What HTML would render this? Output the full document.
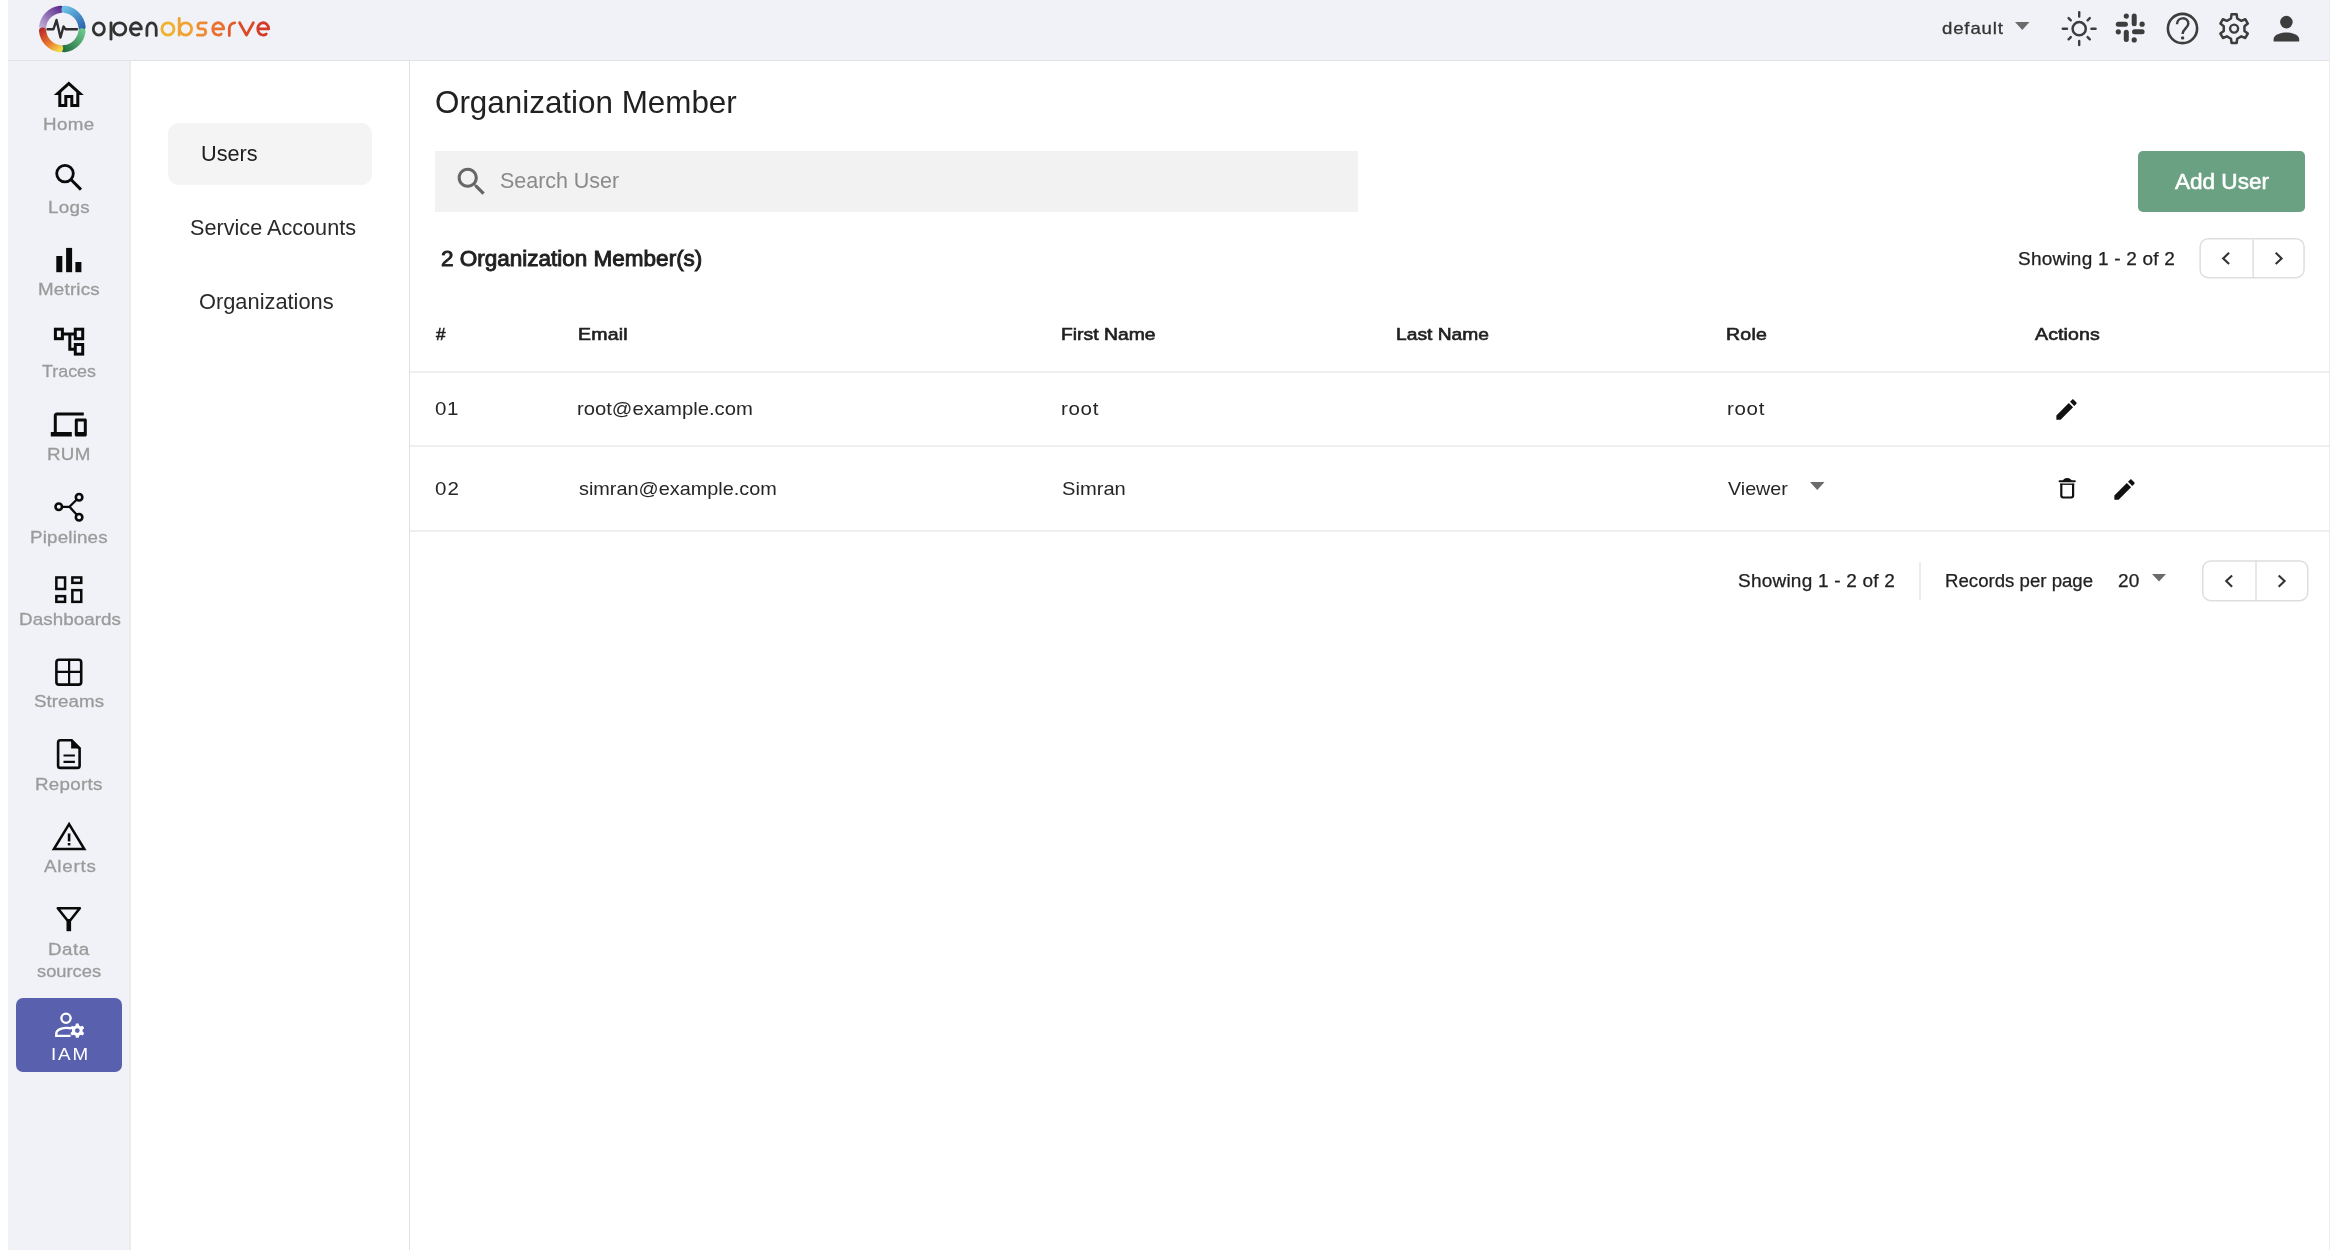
<!DOCTYPE html>
<html><head><meta charset="utf-8"><title>OpenObserve - IAM Users</title>
<style>
html,body{margin:0;padding:0}
body{width:2330px;height:1250px;position:relative;overflow:hidden;background:#fff;font-family:"Liberation Sans", sans-serif}
.t{position:absolute;white-space:nowrap;will-change:transform;transform-origin:0 0}
.b{position:absolute;display:block}
#wrap{position:absolute;left:0;top:0;width:2330px;height:1250px}
</style></head><body>
<div id="wrap"><div class="b" style="left:8px;top:0;width:2322px;height:60px;background:#f1f2f7"></div>
<div class="b" style="left:8px;top:60px;width:2322px;height:1px;background:#e2e2e7"></div>
<div class="b" style="left:8px;top:61px;width:122px;height:1189px;background:#f1f2f7"></div>
<div class="b" style="left:129px;top:61px;width:2px;height:1189px;background:#ebebeb"></div>
<div class="b" style="left:409px;top:61px;width:1px;height:1189px;background:#e0e0e0"></div>
<div class="b" style="left:2329px;top:0px;width:1px;height:1250px;background:#ececec"></div>
<div class="t" style="left:1942.38px;top:20.00px;font-size:16.2px;line-height:16.2px;letter-spacing:0.725px;color:#333333;font-weight:normal;transform:scaleX(1.1500);-webkit-text-stroke:0.3px #333333;">default</div>
<svg class="b" style="left:2015px;top:22px" width="15" height="9" viewBox="0 0 15 9"><path d="M0 0h14.5L7.25 8z" fill="#6b6b6b"/></svg>
<div class="t" style="left:43.41px;top:116.00px;font-size:17.4px;line-height:17.4px;letter-spacing:0.353px;color:#9a9a9a;font-weight:normal;transform:scaleX(1.0800);-webkit-text-stroke:0.3px #9a9a9a;">Home</div>
<div class="t" style="left:48.12px;top:199.00px;font-size:17.4px;line-height:17.4px;letter-spacing:0.306px;color:#9a9a9a;font-weight:normal;transform:scaleX(1.0800);-webkit-text-stroke:0.3px #9a9a9a;">Logs</div>
<div class="t" style="left:37.91px;top:281.00px;font-size:17.4px;line-height:17.4px;letter-spacing:0.182px;color:#9a9a9a;font-weight:normal;transform:scaleX(1.0800);-webkit-text-stroke:0.3px #9a9a9a;">Metrics</div>
<div class="t" style="left:42.21px;top:363.00px;font-size:17.4px;line-height:17.4px;letter-spacing:0.000px;color:#9a9a9a;font-weight:normal;transform:scaleX(1.0272);-webkit-text-stroke:0.3px #9a9a9a;">Traces</div>
<div class="t" style="left:47.41px;top:446.00px;font-size:17.4px;line-height:17.4px;letter-spacing:0.236px;color:#9a9a9a;font-weight:normal;transform:scaleX(1.0800);-webkit-text-stroke:0.3px #9a9a9a;">RUM</div>
<div class="t" style="left:29.82px;top:529.00px;font-size:17.4px;line-height:17.4px;letter-spacing:0.160px;color:#9a9a9a;font-weight:normal;transform:scaleX(1.0800);-webkit-text-stroke:0.3px #9a9a9a;">Pipelines</div>
<div class="t" style="left:18.52px;top:611.00px;font-size:17.4px;line-height:17.4px;letter-spacing:0.073px;color:#9a9a9a;font-weight:normal;transform:scaleX(1.0800);-webkit-text-stroke:0.3px #9a9a9a;">Dashboards</div>
<div class="t" style="left:33.79px;top:693.00px;font-size:17.4px;line-height:17.4px;letter-spacing:0.024px;color:#9a9a9a;font-weight:normal;transform:scaleX(1.0800);-webkit-text-stroke:0.3px #9a9a9a;">Streams</div>
<div class="t" style="left:35.02px;top:776.00px;font-size:17.4px;line-height:17.4px;letter-spacing:0.265px;color:#9a9a9a;font-weight:normal;transform:scaleX(1.0800);-webkit-text-stroke:0.3px #9a9a9a;">Reports</div>
<div class="t" style="left:43.50px;top:858.00px;font-size:17.4px;line-height:17.4px;letter-spacing:0.725px;color:#9a9a9a;font-weight:normal;transform:scaleX(1.0800);-webkit-text-stroke:0.3px #9a9a9a;">Alerts</div>
<div class="t" style="left:47.72px;top:941.00px;font-size:17.4px;line-height:17.4px;letter-spacing:0.441px;color:#9a9a9a;font-weight:normal;transform:scaleX(1.0800);-webkit-text-stroke:0.3px #9a9a9a;">Data</div>
<div class="t" style="left:36.97px;top:963.00px;font-size:17.4px;line-height:17.4px;letter-spacing:0.000px;color:#9a9a9a;font-weight:normal;transform:scaleX(1.0527);-webkit-text-stroke:0.3px #9a9a9a;">sources</div>
<div class="b" style="left:16px;top:998px;width:106px;height:74px;background:#5960ae;border-radius:7px"></div>
<div class="t" style="left:50.64px;top:1046.00px;font-size:17.4px;line-height:17.4px;letter-spacing:1.681px;color:#ffffff;font-weight:normal;transform:scaleX(1.0800);">IAM</div>
<div class="b" style="left:168px;top:123px;width:204px;height:62px;background:#f4f4f4;border-radius:11px"></div>
<div class="t" style="left:201.36px;top:144.00px;font-size:21.5px;line-height:21.5px;letter-spacing:0.000px;color:#212121;font-weight:normal;transform:scaleX(1.0102);">Users</div>
<div class="t" style="left:190.49px;top:218.00px;font-size:21.5px;line-height:21.5px;letter-spacing:0.000px;color:#2a2a2a;font-weight:normal;transform:scaleX(1.0066);">Service Accounts</div>
<div class="t" style="left:198.99px;top:292.00px;font-size:21.5px;line-height:21.5px;letter-spacing:0.000px;color:#2a2a2a;font-weight:normal;transform:scaleX(1.0147);">Organizations</div>
<div class="t" style="left:435.39px;top:87.00px;font-size:30.5px;line-height:30.5px;letter-spacing:0.000px;color:#212121;font-weight:normal;transform:scaleX(1.0289);">Organization Member</div>
<div class="b" style="left:435px;top:151px;width:923px;height:61px;background:#f2f2f2"></div>
<div class="t" style="left:499.70px;top:171.00px;font-size:21.5px;line-height:21.5px;letter-spacing:-0.035px;color:#8a8a8a;font-weight:normal;">Search User</div>
<div class="b" style="left:2138px;top:151px;width:167px;height:61px;background:#6ba183;border-radius:5px"></div>
<div class="t" style="left:2174.60px;top:172.00px;font-size:21.5px;line-height:21.5px;letter-spacing:0.000px;color:#ffffff;font-weight:normal;transform:scaleX(1.0484);-webkit-text-stroke:0.55px #ffffff;">Add User</div>
<div class="t" style="left:441.22px;top:249.00px;font-size:21.5px;line-height:21.5px;letter-spacing:0.000px;color:#212121;font-weight:normal;transform:scaleX(1.0466);-webkit-text-stroke:0.9px #212121;">2 Organization Member(s)</div>
<div class="t" style="left:2017.56px;top:251.00px;font-size:17.6px;line-height:17.6px;letter-spacing:0.203px;color:#212121;font-weight:normal;transform:scaleX(1.0800);-webkit-text-stroke:0.25px #212121;">Showing 1 - 2 of 2</div>
<div class="t" style="left:436.40px;top:326.00px;font-size:17px;line-height:17px;letter-spacing:0.000px;color:#212121;font-weight:normal;-webkit-text-stroke:0.6px #212121;">#</div>
<div class="t" style="left:577.72px;top:326.00px;font-size:17px;line-height:17px;letter-spacing:0.152px;color:#212121;font-weight:normal;transform:scaleX(1.1500);-webkit-text-stroke:0.6px #212121;">Email</div>
<div class="t" style="left:1061.34px;top:326.00px;font-size:17px;line-height:17px;letter-spacing:0.000px;color:#212121;font-weight:normal;transform:scaleX(1.1370);-webkit-text-stroke:0.6px #212121;">First Name</div>
<div class="t" style="left:1395.75px;top:326.00px;font-size:17px;line-height:17px;letter-spacing:-0.000px;color:#212121;font-weight:normal;transform:scaleX(1.1307);-webkit-text-stroke:0.6px #212121;">Last Name</div>
<div class="t" style="left:1726.42px;top:326.00px;font-size:17px;line-height:17px;letter-spacing:0.172px;color:#212121;font-weight:normal;transform:scaleX(1.1500);-webkit-text-stroke:0.6px #212121;">Role</div>
<div class="t" style="left:2035.20px;top:326.00px;font-size:17px;line-height:17px;letter-spacing:0.102px;color:#212121;font-weight:normal;transform:scaleX(1.1500);-webkit-text-stroke:0.6px #212121;">Actions</div>
<div class="b" style="left:410px;top:371px;width:1919px;height:2px;background:#efefef"></div>
<div class="t" style="left:435.19px;top:399.00px;font-size:19px;line-height:19px;letter-spacing:0.593px;color:#262626;font-weight:normal;transform:scaleX(1.0800);">01</div>
<div class="t" style="left:577.47px;top:399.00px;font-size:19px;line-height:19px;letter-spacing:0.000px;color:#262626;font-weight:normal;transform:scaleX(1.0650);">root@example.com</div>
<div class="t" style="left:1061.15px;top:399.00px;font-size:19px;line-height:19px;letter-spacing:0.622px;color:#262626;font-weight:normal;transform:scaleX(1.0800);">root</div>
<div class="t" style="left:1726.85px;top:399.00px;font-size:19px;line-height:19px;letter-spacing:0.622px;color:#262626;font-weight:normal;transform:scaleX(1.0800);">root</div>
<div class="b" style="left:410px;top:445px;width:1919px;height:2px;background:#efefef"></div>
<div class="t" style="left:435.19px;top:479.00px;font-size:19px;line-height:19px;letter-spacing:0.963px;color:#262626;font-weight:normal;transform:scaleX(1.0800);">02</div>
<div class="t" style="left:578.88px;top:479.00px;font-size:19px;line-height:19px;letter-spacing:0.000px;color:#262626;font-weight:normal;transform:scaleX(1.0446);">simran@example.com</div>
<div class="t" style="left:1061.97px;top:479.00px;font-size:19px;line-height:19px;letter-spacing:0.000px;color:#262626;font-weight:normal;transform:scaleX(1.0598);">Simran</div>
<div class="t" style="left:1728.07px;top:479.00px;font-size:19px;line-height:19px;letter-spacing:0.000px;color:#262626;font-weight:normal;transform:scaleX(1.0358);">Viewer</div>
<svg class="b" style="left:1810px;top:482px" width="15" height="9" viewBox="0 0 15 9"><path d="M0 0h14.5L7.25 8z" fill="#6b6b6b"/></svg>
<div class="b" style="left:410px;top:530px;width:1919px;height:2px;background:#efefef"></div>
<div class="t" style="left:1738.36px;top:573.00px;font-size:17.6px;line-height:17.6px;letter-spacing:0.203px;color:#212121;font-weight:normal;transform:scaleX(1.0800);-webkit-text-stroke:0.25px #212121;">Showing 1 - 2 of 2</div>
<div class="b" style="left:1919px;top:562px;width:2px;height:38px;background:#ececec"></div>
<div class="t" style="left:1945.04px;top:573.00px;font-size:17.6px;line-height:17.6px;letter-spacing:0.000px;color:#212121;font-weight:normal;transform:scaleX(1.0589);-webkit-text-stroke:0.25px #212121;">Records per page</div>
<div class="t" style="left:2118.45px;top:573.00px;font-size:17.6px;line-height:17.6px;letter-spacing:0.148px;color:#212121;font-weight:normal;transform:scaleX(1.0800);-webkit-text-stroke:0.25px #212121;">20</div>
<svg class="b" style="left:2152px;top:574px" width="15" height="9" viewBox="0 0 15 9"><path d="M0 0h14L7 7.5z" fill="#6b6b6b"/></svg>
<svg class="b" style="left:0;top:0" width="2330" height="1250"><rect x="2200.15" y="238.65" width="103.90000000000009" height="38.99999999999997" rx="8" fill="none" stroke="#dedede" stroke-width="1.5"/><path d="M2253.2 237.9 V278.4" stroke="#e0e0e0" stroke-width="1.5"/><path d="M2229.1 252.7 L2223.2 258.4 L2229.1 264.1" fill="none" stroke="#333" stroke-width="2.1"/><path d="M2275.7 252.7 L2281.6 258.4 L2275.7 264.1" fill="none" stroke="#333" stroke-width="2.1"/></svg>
<svg class="b" style="left:0;top:0" width="2330" height="1250"><rect x="2202.75" y="560.95" width="105.0" height="39.69999999999993" rx="8" fill="none" stroke="#dedede" stroke-width="1.5"/><path d="M2256 560.2 V601.4" stroke="#e0e0e0" stroke-width="1.5"/><path d="M2232.1 575.4 L2226.2 581.1 L2232.1 586.8" fill="none" stroke="#333" stroke-width="2.1"/><path d="M2278.7 575.4 L2284.6 581.1 L2278.7 586.8" fill="none" stroke="#333" stroke-width="2.1"/></svg>
<svg class="b" style="left:2053.10px;top:395.50px" width="27" height="27" viewBox="0 0 24 24"><path d="M3 17.25V21h3.75L17.81 9.94l-3.75-3.75L3 17.25zM20.71 7.04c.39-.39.39-1.02 0-1.41l-2.34-2.34c-.39-.39-1.02-.39-1.41 0l-1.83 1.83 3.75 3.75 1.83-1.83z" fill="#111"/></svg>
<svg class="b" style="left:0;top:0" width="2330" height="1250"><path d="M2059.6 481.3 H2074.8" stroke="#111" stroke-width="2.1" stroke-linecap="round"/><path d="M2063.6 480.4 Q2064.6 478.6 2067.2 478.6 Q2069.8 478.6 2070.8 480.4 Z" fill="#111" stroke="#111" stroke-width="1.2"/><path d="M2061.3 483.8 V495.6 Q2061.3 497.5 2063.2 497.5 H2071.2 Q2073.1 497.5 2073.1 495.6 V483.8" fill="none" stroke="#111" stroke-width="2.2"/><path d="M2060.2 484.2 H2074.2" stroke="#111" stroke-width="1.4"/></svg>
<svg class="b" style="left:2110.70px;top:475.50px" width="27" height="27" viewBox="0 0 24 24"><path d="M3 17.25V21h3.75L17.81 9.94l-3.75-3.75L3 17.25zM20.71 7.04c.39-.39.39-1.02 0-1.41l-2.34-2.34c-.39-.39-1.02-.39-1.41 0l-1.83 1.83 3.75 3.75 1.83-1.83z" fill="#111"/></svg>
<svg class="b" style="left:453.35px;top:162.65px" width="37.2" height="37.2" viewBox="0 0 24 24"><path d="M15.5 14h-.79l-.28-.27C15.41 12.59 16 11.11 16 9.5 16 5.91 13.09 3 9.5 3S3 5.91 3 9.5 5.91 16 9.5 16c1.61 0 3.09-.59 4.23-1.57l.27.28v.79l5 4.99L20.49 19l-4.99-5zm-6 0C7.01 14 5 11.99 5 9.5S7.01 5 9.5 5 14 7.01 14 9.5 11.99 14 9.5 14z" fill="#666"/></svg>
<svg class="b" style="left:0;top:0" width="2330" height="1250" viewBox="0 0 2330 1250"><defs><linearGradient id="gP" x1="41" y1="30" x2="62" y2="8" gradientUnits="userSpaceOnUse"><stop offset="0" stop-color="#c6b6dc"/><stop offset="1" stop-color="#5b2a8c"/></linearGradient><linearGradient id="gB" x1="64" y1="8" x2="83" y2="29" gradientUnits="userSpaceOnUse"><stop offset="0" stop-color="#6cc2e6"/><stop offset="1" stop-color="#2b63ad"/></linearGradient><linearGradient id="gG" x1="83" y1="31" x2="62" y2="50" gradientUnits="userSpaceOnUse"><stop offset="0" stop-color="#6cc58a"/><stop offset="1" stop-color="#1f6b3e"/></linearGradient><linearGradient id="gR" x1="60" y1="50" x2="41" y2="29" gradientUnits="userSpaceOnUse"><stop offset="0" stop-color="#f3d84a"/><stop offset="0.45" stop-color="#e8752e"/><stop offset="1" stop-color="#b8282a"/></linearGradient></defs>
<path d="M42.69 26.24 A19.8 19.8 0 0 1 60.23 9.31" fill="none" stroke="url(#gP)" stroke-width="7.2" stroke-linecap="round"/>
<path d="M65.06 9.39 A19.8 19.8 0 0 1 81.99 26.93" fill="none" stroke="url(#gB)" stroke-width="7.2" stroke-linecap="round"/>
<path d="M81.91 31.76 A19.8 19.8 0 0 1 64.37 48.69" fill="none" stroke="url(#gG)" stroke-width="7.2" stroke-linecap="round"/>
<path d="M59.54 48.61 A19.8 19.8 0 0 1 42.61 31.07" fill="none" stroke="url(#gR)" stroke-width="7.2" stroke-linecap="round"/>
<path d="M47.5 29.2 H53.5 L56.5 20 L60.5 37.5 L63.5 26.5 L65.5 29.2 H77" fill="none" stroke="#2e2e2e" stroke-width="2.4" stroke-linejoin="round" stroke-linecap="round"/>
<ellipse cx="98.85" cy="28.950000000000003" rx="5.55" ry="6.15" fill="none" stroke="#333333" stroke-width="2.8"/>
<ellipse cx="119.6" cy="28.950000000000003" rx="6.2" ry="6.15" fill="none" stroke="#333333" stroke-width="2.8"/>
<path d="M111.0 22.8 V39.2" fill="none" stroke="#333333" stroke-width="2.8" stroke-linecap="round" stroke-linejoin="round"/>
<path d="M130.40 28.95 H141.40 A5.5 6.15 0 1 0 138.93 34.05" fill="none" stroke="#333333" stroke-width="2.8" stroke-linecap="round" stroke-linejoin="round"/>
<path d="M146.9 35.5 V28.950000000000003 A4.65 6.15 0 0 1 156.2 28.950000000000003 V35.5" fill="none" stroke="#333333" stroke-width="2.8" stroke-linecap="round" stroke-linejoin="round"/>
<ellipse cx="167.95" cy="28.950000000000003" rx="6.0" ry="6.15" fill="none" stroke="#f0b12c" stroke-width="2.8"/>
<ellipse cx="185.6" cy="28.950000000000003" rx="6.0" ry="6.15" fill="none" stroke="#f0a232" stroke-width="2.8"/>
<path d="M179.2 18.3 V35.1" fill="none" stroke="#f0a232" stroke-width="2.8" stroke-linecap="round" stroke-linejoin="round"/>
<path d="M206.3 22.8 H200.6 A3.1 3.1 0 0 0 200.6 28.950000000000003 H203 A3.1 3.1 0 0 1 203 35.1 H197.3" fill="none" stroke="#ee8a34" stroke-width="2.8" stroke-linecap="round" stroke-linejoin="round"/>
<path d="M212.70 28.95 H223.70 A5.5 6.15 0 1 0 221.22 34.05" fill="none" stroke="#ea712d" stroke-width="2.8" stroke-linecap="round" stroke-linejoin="round"/>
<path d="M229.3 35.5 V28.950000000000003 A5.5 5.8 0 0 1 234.8 22.8" fill="none" stroke="#e35b29" stroke-width="2.8" stroke-linecap="round" stroke-linejoin="round"/>
<path d="M239.6 22.8 L246.5 35.1 L253.3 22.8" fill="none" stroke="#dc4a27" stroke-width="2.8" stroke-linecap="round" stroke-linejoin="round"/>
<path d="M257.70 28.95 H268.70 A5.5 6.15 0 1 0 266.22 34.05" fill="none" stroke="#d33b27" stroke-width="2.8" stroke-linecap="round" stroke-linejoin="round"/><path transform="translate(50.80 76.90) scale(1.5)" d="M12 5.69l5 4.5V18h-2v-6H9v6H7v-7.81l5-4.5M12 3L2 12h3v8h6v-6h2v6h6v-8h3L12 3z" fill="#0a0a0a"/>
<circle cx="65" cy="173.6" r="8.3" fill="none" stroke="#0a0a0a" stroke-width="2.8"/>
<path d="M71.2 179.8 L81 189.6" stroke="#0a0a0a" stroke-width="3" stroke-linecap="butt"/>
<rect x="56.3" y="256" width="6" height="16.2" fill="#0a0a0a"/>
<rect x="66.1" y="247.9" width="6" height="24.3" fill="#0a0a0a"/>
<rect x="75.4" y="262" width="6" height="10.2" fill="#0a0a0a"/>
<rect x="55.4" y="329.2" width="7" height="9.5" fill="none" stroke="#0a0a0a" stroke-width="3.0"/>
<rect x="75.3" y="329.2" width="7.4" height="9.5" fill="none" stroke="#0a0a0a" stroke-width="3.0"/>
<rect x="75.3" y="344.5" width="7.4" height="9.6" fill="none" stroke="#0a0a0a" stroke-width="3.0"/>
<path d="M62.4 334 H75.3 M69.8 334 V349.3 H75.3" fill="none" stroke="#0a0a0a" stroke-width="3.0"/>
<path transform="translate(50.80 406.50) scale(1.5)" d="M4 6h18V4H4c-1.1 0-2 .9-2 2v11H0v3h14v-3H4V6zm19 2h-6c-.55 0-1 .45-1 1v10c0 .55.45 1 1 1h6c.55 0 1-.45 1-1V9c0-.55-.45-1-1-1zm-1 9h-4v-7h4v7z" fill="#0a0a0a"/>
<path d="M58.75 506.8 H69.5 L79.1 497.3 M69.5 506.8 L79.1 517.3" fill="none" stroke="#0a0a0a" stroke-width="2.3" stroke-linejoin="round"/>
<circle cx="58.75" cy="506.8" r="3.25" fill="#f1f2f7" stroke="#0a0a0a" stroke-width="2.6"/>
<circle cx="79.1" cy="497.3" r="3.25" fill="#f1f2f7" stroke="#0a0a0a" stroke-width="2.6"/>
<circle cx="79.1" cy="517.3" r="3.25" fill="#f1f2f7" stroke="#0a0a0a" stroke-width="2.6"/>
<rect x="56.35" y="577.45" width="8.70" height="11.50" fill="none" stroke="#0a0a0a" stroke-width="2.5"/>
<rect x="72.35" y="577.45" width="8.90" height="5.40" fill="none" stroke="#0a0a0a" stroke-width="2.5"/>
<rect x="56.35" y="596.15" width="8.70" height="5.70" fill="none" stroke="#0a0a0a" stroke-width="2.5"/>
<rect x="72.35" y="590.15" width="8.90" height="11.70" fill="none" stroke="#0a0a0a" stroke-width="2.5"/>
<rect x="56.4" y="659.8" width="24.8" height="24.8" rx="2.6" fill="none" stroke="#0a0a0a" stroke-width="2.6"/>
<path d="M69.1 659.8 V684.6 M56.4 671.9 H81.2" stroke="#0a0a0a" stroke-width="2.2"/>
<path d="M71.5 740.3 H60.3 Q58.1 740.3 58.1 742.5 V765.7 Q58.1 767.9 60.3 767.9 H77.4 Q79.6 767.9 79.6 765.7 V748.5 Z" fill="none" stroke="#0a0a0a" stroke-width="2.6" stroke-linejoin="round"/>
<path d="M71.1 739 H72 L80.9 747.9 V748.5 H71.1 Z" fill="#0a0a0a"/>
<path d="M63.5 755.5 H74.9 M63.5 761.9 H74.9" stroke="#0a0a0a" stroke-width="2.2"/>
<path d="M69.1 824.2 L84.3 849 H53.9 Z" fill="none" stroke="#0a0a0a" stroke-width="2.5" stroke-linejoin="miter"/>
<rect x="67.8" y="833.5" width="2.6" height="7.9" fill="#0a0a0a"/>
<rect x="67.8" y="843" width="2.6" height="2.4" fill="#0a0a0a"/>
<path d="M57.8 908.2 H79.8 L70.3 920.2 H67.3 Z" fill="none" stroke="#0a0a0a" stroke-width="2.6" stroke-linejoin="round"/>
<rect x="66.5" y="919" width="4.6" height="12.2" fill="#0a0a0a"/>
<circle cx="66" cy="1018.2" r="4.6" fill="none" stroke="#ffffff" stroke-width="2.3"/>
<path d="M71.2 1028.3 C63 1026.8 56.3 1029.3 56.3 1033.6 V1035.9 H70.6" fill="none" stroke="#ffffff" stroke-width="2.4"/>
<path d="M75.54 1025.49 L75.91 1023.43 L78.69 1023.43 L79.06 1025.49 L80.84 1026.52 L82.81 1025.81 L84.20 1028.22 L82.60 1029.57 L82.60 1031.63 L84.20 1032.98 L82.81 1035.39 L80.84 1034.68 L79.06 1035.71 L78.69 1037.77 L75.91 1037.77 L75.54 1035.71 L73.76 1034.68 L71.79 1035.39 L70.40 1032.98 L72.00 1031.63 L72.00 1029.57 L70.40 1028.22 L71.79 1025.81 L73.76 1026.52 Z" fill="#ffffff"/>
<circle cx="77.3" cy="1030.6" r="2.3" fill="#5960ae"/><circle cx="2079.2" cy="28.7" r="6.6" fill="none" stroke="#3d3d3d" stroke-width="2.5"/>
<path d="M2079.20 16.50 L2079.20 12.30" stroke="#3d3d3d" stroke-width="2.4" stroke-linecap="round"/>
<path d="M2087.61 20.29 L2089.81 18.09" stroke="#3d3d3d" stroke-width="2.4" stroke-linecap="round"/>
<path d="M2091.40 28.70 L2095.60 28.70" stroke="#3d3d3d" stroke-width="2.4" stroke-linecap="round"/>
<path d="M2087.61 37.11 L2089.81 39.31" stroke="#3d3d3d" stroke-width="2.4" stroke-linecap="round"/>
<path d="M2079.20 40.90 L2079.20 45.10" stroke="#3d3d3d" stroke-width="2.4" stroke-linecap="round"/>
<path d="M2070.79 37.11 L2068.59 39.31" stroke="#3d3d3d" stroke-width="2.4" stroke-linecap="round"/>
<path d="M2067.00 28.70 L2062.80 28.70" stroke="#3d3d3d" stroke-width="2.4" stroke-linecap="round"/>
<path d="M2070.79 20.29 L2068.59 18.09" stroke="#3d3d3d" stroke-width="2.4" stroke-linecap="round"/>
<path d="M2118.3 24.2 L2125.4 24.2" stroke="#3d3d3d" stroke-width="5" stroke-linecap="round"/>
<path d="M2134.2 16.1 L2134.2 23.7" stroke="#3d3d3d" stroke-width="5" stroke-linecap="round"/>
<path d="M2134.5 31.8 L2142.1 31.8" stroke="#3d3d3d" stroke-width="5" stroke-linecap="round"/>
<path d="M2126.3 32.3 L2126.3 39.5" stroke="#3d3d3d" stroke-width="5" stroke-linecap="round"/>
<circle cx="2126.3" cy="16.1" r="2.6" fill="#3d3d3d"/>
<circle cx="2142.1" cy="24.2" r="2.6" fill="#3d3d3d"/>
<circle cx="2118.3" cy="31.8" r="2.6" fill="#3d3d3d"/>
<circle cx="2134.2" cy="39.9" r="2.6" fill="#3d3d3d"/>
<circle cx="2182.5" cy="28.5" r="14.6" fill="none" stroke="#3d3d3d" stroke-width="2.6"/>
<path d="M2177.0 24.3 C2177.0 16.5 2188.5 16.5 2188.3 23.7 C2188.1 28.0 2182.7 29.0 2182.6 34.0" fill="none" stroke="#3d3d3d" stroke-width="2.5"/>
<circle cx="2182.6" cy="37.9" r="1.7" fill="#3d3d3d"/>
<path d="M2231.00 18.46 L2231.56 14.22 L2236.64 14.22 L2237.20 18.46 L2241.33 20.85 L2245.28 19.22 L2247.82 23.61 L2244.43 26.22 L2244.43 30.98 L2247.82 33.59 L2245.28 37.98 L2241.33 36.35 L2237.20 38.74 L2236.64 42.98 L2231.56 42.98 L2231.00 38.74 L2226.87 36.35 L2222.92 37.98 L2220.38 33.59 L2223.77 30.98 L2223.77 26.22 L2220.38 23.61 L2222.92 19.22 L2226.87 20.85 Z" fill="none" stroke="#3d3d3d" stroke-width="2.5" stroke-linejoin="round"/>
<circle cx="2234.1" cy="28.6" r="4.0" fill="none" stroke="#3d3d3d" stroke-width="2.4"/>
<circle cx="2286.4" cy="22.1" r="6.3" fill="#3d3d3d"/>
<path d="M2273.6 41.5 V39.1 C2273.6 34.1 2282.4 32.5 2286.4 32.5 C2290.4 32.5 2299.2000000000003 34.1 2299.2000000000003 39.1 V41.5 Z" fill="#3d3d3d"/></svg>
</div></body></html>
